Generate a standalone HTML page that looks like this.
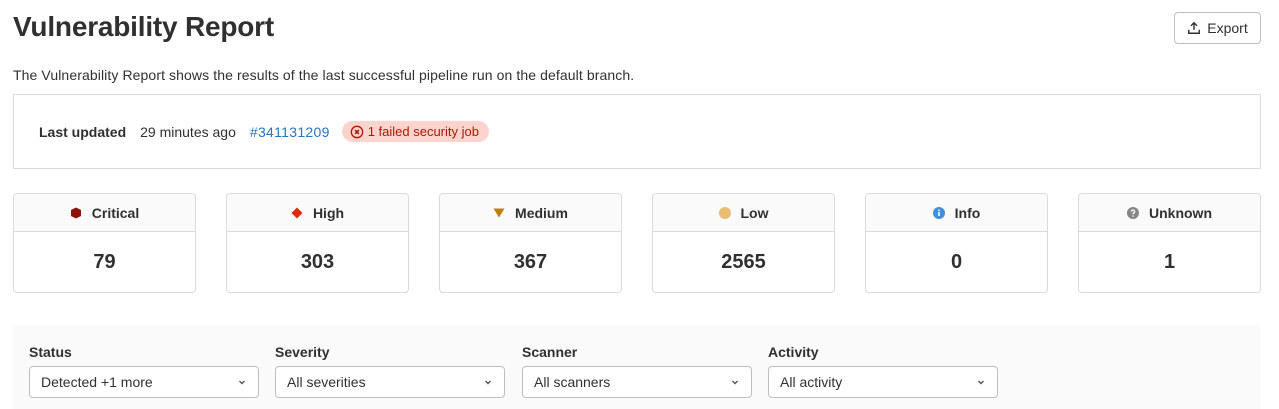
<!DOCTYPE html>
<html><head><style>
*{box-sizing:border-box;margin:0;padding:0}
body{width:1279px;height:409px;overflow:hidden;background:#fff;font-family:"Liberation Sans",sans-serif;color:#303030;position:relative}
.abs{position:absolute}
h1{position:absolute;left:13px;top:11px;font-size:28px;font-weight:bold;color:#303030;letter-spacing:-0.2px}
.btn{left:1174px;top:12px;width:87px;height:32px;border:1px solid #bfbfbf;border-radius:4px;font-size:14px;display:flex;align-items:center;justify-content:center;gap:6px}
.desc{left:13px;top:67px;font-size:14px;letter-spacing:0.1px}
.info{left:13px;top:94px;width:1248px;height:75px;border:1px solid #dbdbdb;display:flex;align-items:center;padding-left:25px;font-size:14px}
.badge{background:#fdd4cd;color:#ae1800;border-radius:12px;padding:3px 10px 3px 8px;font-size:13px;display:flex;align-items:center;gap:4px;margin-left:12px}
.card{top:193px;width:183px;height:100px;border:1px solid #dbdbdb;border-radius:4px;overflow:hidden}
.card .h{height:38px;background:#fafafa;border-bottom:1px solid #dbdbdb;display:flex;align-items:center;justify-content:center;gap:10px;font-weight:bold;font-size:14px}
.card .n{height:61px;display:flex;align-items:center;justify-content:center;font-weight:bold;font-size:20px}
.filt{left:13px;top:325px;width:1248px;height:84px;background:#fafafa}
.lbl{top:344px;font-size:14px;font-weight:bold}
.sel{top:366px;width:230px;height:32px;border:1px solid #bfbfbf;border-radius:4px;background:#fff;font-size:14px;padding:7px 11px;display:flex;justify-content:space-between;align-items:center}
</style></head><body>
<h1>Vulnerability Report</h1>
<div class="abs btn"><svg width="14" height="14" viewBox="0 0 16 16" fill="none" stroke="#303030" stroke-width="1.6"><path d="M8 10V2M4.5 5.5L8 2l3.5 3.5M2 10v4h12v-4"/></svg>Export</div>
<div class="abs desc">The Vulnerability Report shows the results of the last successful pipeline run on the default branch.</div>
<div class="abs info"><b>Last updated</b><span style="margin-left:14px">29 minutes ago</span><span style="color:#1f75cb;margin-left:14px;letter-spacing:0.3px">#341131209</span>
<span class="badge"><svg width="14" height="14" viewBox="0 0 16 16"><circle cx="8" cy="8" r="6.5" fill="none" stroke="#ae1800" stroke-width="1.5"/><path d="M5.8 5.8l4.4 4.4M10.2 5.8l-4.4 4.4" stroke="#ae1800" stroke-width="1.8"/></svg>1 failed security job</span></div>

<div class="abs card" style="left:13px"><div class="h"><svg width="12" height="12" viewBox="0 0 12 12"><path d="M6 0.5L11 3v6l-5 2.5L1 9V3z" fill="#8d1300"/></svg>Critical</div><div class="n">79</div></div>
<div class="abs card" style="left:226px"><div class="h"><svg width="12" height="12" viewBox="0 0 12 12"><path d="M6 0.5L11.5 6 6 11.5 0.5 6z" fill="#dd2b0e"/></svg>High</div><div class="n">303</div></div>
<div class="abs card" style="left:439px"><div class="h"><svg width="12" height="12" viewBox="0 0 12 12"><path d="M0.5 1.5h11L6 10.5z" fill="#c17d10"/></svg>Medium</div><div class="n">367</div></div>
<div class="abs card" style="left:652px"><div class="h"><svg width="12" height="12" viewBox="0 0 12 12"><circle cx="6" cy="6" r="6" fill="#e9be74"/></svg>Low</div><div class="n">2565</div></div>
<div class="abs card" style="left:865px"><div class="h"><svg width="12" height="12" viewBox="0 0 12 12"><circle cx="6" cy="6" r="6" fill="#428fdc"/><path d="M6 5v4" stroke="#fff" stroke-width="1.6"/><circle cx="6" cy="3.3" r="0.9" fill="#fff"/></svg>Info</div><div class="n">0</div></div>
<div class="abs card" style="left:1078px"><div class="h"><svg width="12" height="12" viewBox="0 0 12 12"><circle cx="6" cy="6" r="6" fill="#868686"/><path d="M4.4 4.6a1.6 1.6 0 1 1 2.2 1.5c-.5.2-.6.5-.6 1.1" stroke="#fff" stroke-width="1.3" fill="none"/><circle cx="6" cy="9" r="0.8" fill="#fff"/></svg>Unknown</div><div class="n">1</div></div>

<div class="abs filt"></div>
<div class="abs lbl" style="left:29px">Status</div>
<div class="abs lbl" style="left:275px">Severity</div>
<div class="abs lbl" style="left:522px">Scanner</div>
<div class="abs lbl" style="left:768px">Activity</div>
<div class="abs sel" style="left:29px">Detected +1 more<svg width="10" height="10" viewBox="0 0 10 10"><path d="M2.5 4l2.5 2.5L7.5 4" stroke="#555" stroke-width="1.4" fill="none"/></svg></div>
<div class="abs sel" style="left:275px">All severities<svg width="10" height="10" viewBox="0 0 10 10"><path d="M2.5 4l2.5 2.5L7.5 4" stroke="#555" stroke-width="1.4" fill="none"/></svg></div>
<div class="abs sel" style="left:522px">All scanners<svg width="10" height="10" viewBox="0 0 10 10"><path d="M2.5 4l2.5 2.5L7.5 4" stroke="#555" stroke-width="1.4" fill="none"/></svg></div>
<div class="abs sel" style="left:768px">All activity<svg width="10" height="10" viewBox="0 0 10 10"><path d="M2.5 4l2.5 2.5L7.5 4" stroke="#555" stroke-width="1.4" fill="none"/></svg></div>
</body></html>
